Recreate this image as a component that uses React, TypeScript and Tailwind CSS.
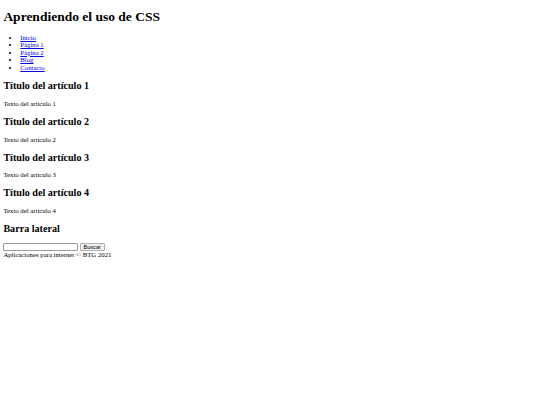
export default function App() {
  const links = ["Inicio", "Página 1", "Página 2", "Blog", "Contacto"];
  const articles = [1, 2, 3, 4];
  return (
    <div className="bg-white min-h-screen">
      <div className="m-[3.375px] text-black text-[6.75px] leading-[7.594px] font-['Liberation_Serif',serif]">
        <header>
          <h1 className="text-[13.5px] font-bold my-[9.045px] leading-[15.61px]">Aprendiendo el uso de CSS</h1>
          <nav>
            <ul className="list-disc pl-[16.875px] my-[6.75px]">
              {links.map((l) => (
                <li key={l} className="leading-[7.594px]">
                  <a href="#" className="text-[#0000ee] underline">
                    {l}
                  </a>
                </li>
              ))}
            </ul>
          </nav>
        </header>
        <main>
          {articles.map((n) => (
            <article key={n}>
              <h2 className="text-[10.125px] font-bold my-[8.404px] leading-[11.39px]">Título del artículo {n}</h2>
              <p className="my-[6.75px] leading-[7.594px]">Texto del artículo {n}</p>
            </article>
          ))}
        </main>
        <aside>
          <h2 className="text-[10.125px] font-bold my-[8.404px] leading-[11.39px]">Barra lateral</h2>
          <form onSubmit={(e) => e.preventDefault()} className="flex items-center gap-[1.7px] h-[8.6px]">
            <input
              type="text"
              className="block w-[74.7px] h-[8.6px] border border-[#9a9a9a] rounded-[1px] px-[1px] bg-white text-[5.625px] font-['Liberation_Sans',sans-serif]"
            />
            <button
              type="submit"
              className="flex items-center justify-center h-[8.6px] w-[24.9px] border border-[#b0b0b0] rounded-[1px] bg-[#efefef] text-[5.625px] leading-[6.5px] text-black font-['Liberation_Sans',sans-serif]"
            >
              Buscar
            </button>
          </form>
        </aside>
        <footer className="leading-[7.594px]">Aplicaciones para internet © BTG 2021</footer>
      </div>
    </div>
  );
}
